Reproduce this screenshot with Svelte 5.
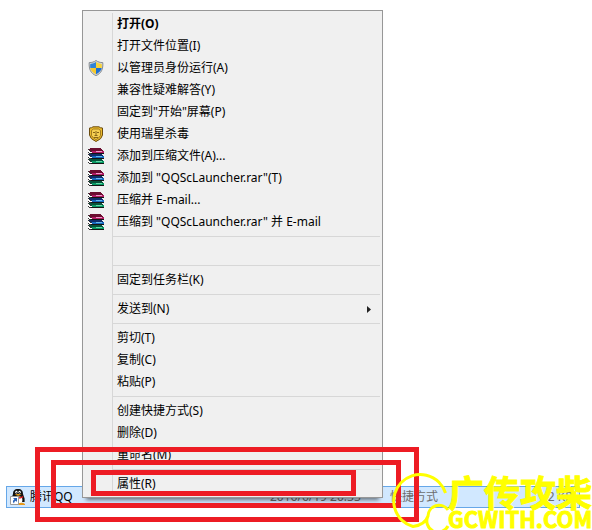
<script lang="ts">
	type Icon = 'shield' | 'lion' | 'rar';

	interface MenuItem {
		label: string;
		icon?: Icon;
		bold?: boolean;
		submenu?: boolean;
	}

	// Groups are divided by separators; the empty one is a blank shell extension slot.
	const groups: MenuItem[][] = [
		[
			{ label: '打开(O)', bold: true },
			{ label: '打开文件位置(I)' },
			{ label: '以管理员身份运行(A)', icon: 'shield' },
			{ label: '兼容性疑难解答(Y)' },
			{ label: '固定到"开始"屏幕(P)' },
			{ label: '使用瑞星杀毒', icon: 'lion' },
			{ label: '添加到压缩文件(A)...', icon: 'rar' },
			{ label: '添加到 "QQScLauncher.rar"(T)', icon: 'rar' },
			{ label: '压缩并 E-mail...', icon: 'rar' },
			{ label: '压缩到 "QQScLauncher.rar" 并 E-mail', icon: 'rar' }
		],
		[{ label: '' }],
		[{ label: '固定到任务栏(K)' }],
		[{ label: '发送到(N)', submenu: true }],
		[{ label: '剪切(T)' }, { label: '复制(C)' }, { label: '粘贴(P)' }],
		[{ label: '创建快捷方式(S)' }, { label: '删除(D)' }, { label: '重命名(M)' }],
		[{ label: '属性(R)' }]
	];
</script>

{#snippet shield()}
	<svg viewBox="0 0 16 16" aria-hidden="true">
		<path d="M8 0.5 C6 2 4 2.6 1.2 2.6 C0.8 9 2.6 13.4 8 15.6 C13.4 13.4 15.2 9 14.8 2.6 C12 2.6 10 2 8 0.5Z" fill="#d5d8da" stroke="#858b91" />
		<path d="M8 2 V8 H2.3 Q2 6 2.3 4 Q6 3.6 8 2Z" fill="#2f83d8" />
		<path d="M8 2 V8 H13.7 Q14 6 13.7 4 Q10 3.6 8 2Z" fill="#f8d33a" />
		<path d="M8 14.2 V8 H2.3 Q3.2 12 8 14.2Z" fill="#f5c92d" />
		<path d="M8 14.2 V8 H13.7 Q12.8 12 8 14.2Z" fill="#1f6fd0" />
	</svg>
{/snippet}

{#snippet lion()}
	<svg viewBox="0 0 16 16" aria-hidden="true">
		<path d="M1.5 2 Q4 2 5 0.8 H11 Q12 2 14.5 2 V9 Q14 13 8 15.5 Q2 13 1.5 9Z" fill="#e9b92c" stroke="#6b4c10" />
		<path d="M3.5 4.5 L5.5 3 H10.5 L12.5 4.5 V9.5 L10.5 12 L8 13.5 L5.5 12 L3.5 9.5Z" fill="#f5cf52" stroke="#8f6a17" stroke-width="0.8" />
		<path d="M5 6.5 H7 M9 6.5 H11 M8 5 V9 M6.5 9.5 H9.5 M6 11.5 H10" fill="none" stroke="#7b5912" stroke-width="0.9" />
	</svg>
{/snippet}

{#snippet book(y: number, dark: string, main: string, light: string)}
	<g transform="translate(0 {y})">
		<path d="M2 0 H12 L16 3 V6 H4 L1 2Z" fill={dark} />
		<path d="M4 3 H16 V5 H4Z" fill={main} />
		<path d="M8 3 H14 V4 H8Z" fill={light} />
		<path d="M0 2 H1 L4 4 V6 H2 L0 4Z" fill="#fff" />
		<path d="M0 1 H1 V2 H2 V3 H3 V4 H2 V3 H1 V2 H0Z M0 4 H1 V5 H3 V6 H1 V5 H0Z" fill="#333" />
		<path d="M3 5 H16 V6 H3Z" fill="#141414" />
	</g>
{/snippet}

{#snippet rar()}
	<svg viewBox="0 0 16 16" shape-rendering="crispEdges" aria-hidden="true">
		{@render book(10, '#07533b', '#0a9a64', '#62d9a8')}
		{@render book(5, '#102d69', '#1668bd', '#65b9ee')}
		{@render book(0, '#6b0d2f', '#b01a62', '#f09aca')}
	</svg>
{/snippet}

{#snippet qq()}
	<svg class="file-icon" viewBox="0 0 16 16" aria-hidden="true">
		<path d="M8 0 C4.4 0 3 2 3 5 L1.6 9 V13 H14.6 V9.6 L13 5 C13 2 11.6 0 8 0Z" fill="#111" />
		<ellipse cx="9.4" cy="11" rx="3" ry="3.4" fill="#fff" />
		<ellipse cx="6.4" cy="3.2" rx="1.1" ry="1.4" fill="#fff" />
		<ellipse cx="9.6" cy="3.2" rx="1.1" ry="1.4" fill="#fff" />
		<path d="M6.4 3 H7.2 V4 H6.4Z M9 3 H9.8 V4 H9Z" fill="#111" />
		<path d="M4.8 5.6 Q8 4.6 11.6 5.6 Q8 7.8 4.8 5.6Z" fill="#f2a51c" />
		<path d="M3 7 Q8 9.4 13.2 7 V8.6 Q8 11 3 8.6Z" fill="#e32222" />
		<path d="M8 14.5 Q12 12.6 15 15 V16 H8Z" fill="#e99a1a" />
		<path d="M0.5 7.5 H8.5 V15.5 H0.5Z" fill="#fff" stroke="#9b9b9b" />
		<path d="M3 9 H7 V13 L5.8 11.8 Q4 12.6 4 14.4 Q1.6 12 4.4 10.4Z" fill="#2861b8" />
	</svg>
{/snippet}

<main class="explorer">
	<div class="file-row">
		<span class="file-row__name">{@render qq()}腾讯QQ</span>
		<span>2016/6/19 20:33</span>
		<span>快捷方式</span>
		<span class="file-row__size">2 KB</span>
	</div>

	<div class="menu" role="menu">
		{#each groups as group, i}
			{#if i > 0}
				<hr class="menu__separator" />
			{/if}
			{#each group as item}
				<button class="menu__item" class:menu__item--bold={item.bold} type="button" role="menuitem">
					<span class="menu__icon">
						{#if item.icon === 'shield'}
							{@render shield()}
						{:else if item.icon === 'lion'}
							{@render lion()}
						{:else if item.icon === 'rar'}
							{@render rar()}
						{/if}
					</span>
					<span class="menu__label">{item.label}</span>
					{#if item.submenu}
						<svg class="menu__arrow" viewBox="0 0 4 7" aria-hidden="true">
							<path d="M0 0 L4 3.5 L0 7Z" fill="#222" />
						</svg>
					{/if}
				</button>
			{/each}
		{/each}
	</div>

	<div class="mark mark--outer"></div>
	<div class="mark mark--middle"></div>
	<div class="mark mark--inner"></div>

	<div class="watermark">
		<svg class="watermark__logo" viewBox="0 0 58 58" aria-hidden="true">
			<path d="M53.5 21 A26.5 26.5 0 1 0 21 54.5 Q33 53 36 44 A11 11 0 0 1 56 38 M36 44 A11 11 0 0 0 56 54" fill="none" stroke="#ff0" stroke-width="3" />
		</svg>
		<div class="watermark__text">
			<span class="watermark__title">广传攻柴</span>
			<span class="watermark__site">GCWITH.COM</span>
		</div>
	</div>
</main>

<style>
	:global(body) {
		margin: 0;
		background: #fff;
	}

	.explorer {
		position: relative;
		box-sizing: border-box;
		min-height: 100vh;
		padding: 486px 12px 0 6px;
		overflow: hidden;
		font-family: 'Noto Sans', 'Noto Sans CJK SC', sans-serif;
		font-size: 12px;
		line-height: 20px;
		color: #000;
	}

	.file-row {
		display: grid;
		grid-template-columns: 263px 120px 1fr auto;
		border: 1px solid #66a7e8;
		background: #d1e8ff;
		color: #6d6d6d;
		white-space: nowrap;
	}

	.file-row__name {
		display: flex;
		align-items: center;
		gap: 4px;
		padding-left: 3px;
		color: #000;
	}

	.file-icon {
		width: 16px;
		height: 16px;
	}

	.file-row__size {
		padding-right: 6px;
	}

	.menu {
		position: absolute;
		top: 10px;
		left: 82px;
		box-sizing: border-box;
		width: 301px;
		padding: 2px;
		border: 1px solid #979797;
		background: linear-gradient(#d7d7d7, #d7d7d7) 29px 2px / 1px calc(100% - 4px) no-repeat #f0f0f0;
		box-shadow: 0 6px 4px -4px rgb(0 0 0 / 0.5);
	}

	.menu__item {
		display: flex;
		align-items: center;
		width: 100%;
		height: 22px;
		padding: 0 9px 0 3px;
		border: 0;
		background: none;
		font: inherit;
		color: inherit;
		text-align: left;
		white-space: nowrap;
	}

	.menu__item--bold {
		font-weight: 700;
	}

	.menu__icon {
		flex: none;
		width: 29px;
		height: 16px;
	}

	.menu__icon svg {
		display: block;
		width: 16px;
		height: 16px;
	}

	.menu__label {
		flex: 1;
	}

	.menu__arrow {
		width: 4px;
		height: 7px;
	}

	.menu__separator {
		height: 1px;
		margin: 3px 0 3px 27px;
		border: 0;
		background: #d7d7d7;
	}

	.mark {
		position: absolute;
		box-sizing: border-box;
		border: 5px solid #ed1c24;
		pointer-events: none;
	}

	.mark--outer {
		top: 447px;
		left: 35px;
		width: 384px;
		height: 75px;
	}

	.mark--middle {
		top: 460px;
		left: 51px;
		width: 350px;
		height: 48px;
	}

	.mark--inner {
		top: 470px;
		left: 91px;
		width: 265px;
		height: 26px;
	}

	.watermark {
		position: absolute;
		top: 472px;
		left: 392px;
		display: flex;
		color: #ff0;
		font-family: 'Noto Sans CJK SC', sans-serif;
		font-weight: 700;
		-webkit-text-stroke: 1px #ff0;
		pointer-events: none;
	}

	.watermark__logo {
		width: 58px;
		height: 58px;
		margin-right: -2px;
	}

	.watermark__text {
		display: flex;
		flex-direction: column;
		white-space: nowrap;
	}

	.watermark__title {
		font-size: 36px;
		line-height: 38px;
	}

	.watermark__site {
		font-size: 22px;
		line-height: 16px;
	}
</style>
